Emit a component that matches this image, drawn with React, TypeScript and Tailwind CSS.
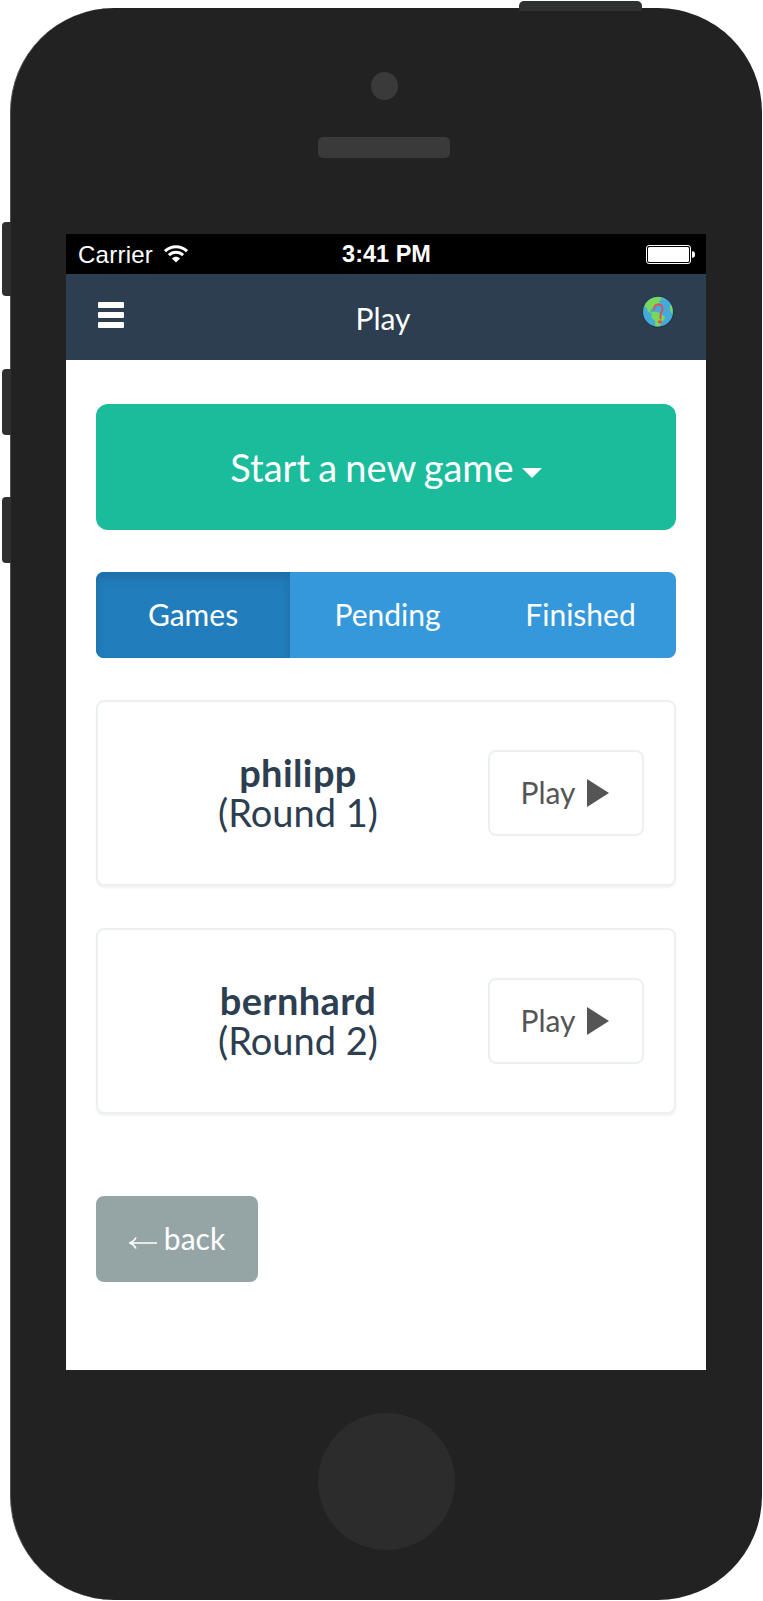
import React from 'react';

const games = [
  { name: 'philipp', round: 1 },
  { name: 'bernhard', round: 2 },
];

function WifiIcon() {
  return (
    <svg className="ml-[11px] h-[18px] w-[24px]" viewBox="0 0 24 18" fill="none" stroke="#fff" strokeWidth="3">
      <path d="M1 6.2C7.2 .1 16.800 .1 23 6.200" />
      <path d="M4.900 10.200C9 6.300 15 6.300 19.100 10.200" />
      <path d="M12 17.500L7.900 13.400C10.300 11.300 13.700 11.300 16.100 13.400Z" fill="#fff" stroke="none" />
    </svg>
  );
}

function BatteryIcon() {
  return (
    <svg className="h-[19px] w-[49px]" viewBox="0 0 49 19">
      <rect x=".5" y=".5" width="44" height="18" rx="2.500" fill="none" stroke="#fff" />
      <rect x="2" y="2" width="41" height="15" rx="1.500" fill="#fff" />
      <path d="M46 6.200h.5a2.500 3.300 0 0 1 0 6.600H46z" fill="#fff" />
    </svg>
  );
}

function GlobeIcon() {
  return (
    <svg className="h-8 w-8" viewBox="0 0 32 32">
      <circle cx="16" cy="16" r="15.800" fill="#24323b" />
      <circle cx="16" cy="15.700" r="15" fill="#43aadb" />
      <path d="M3.500 7.800C7 2.800 12 .7 17.500 1L20 1.600 18.500 3.700 17 5.500 18 7 14.500 8.500 12 11.500 9.500 13 8 15.500 9.500 16.500 12 15.700 16 16 18.500 18.500 22.500 20 23 22.500 20.500 25.500 17.500 30.300 13 30.200 13.200 25 9.200 21.500 9.800 18 6 15.500 4.500 11.500 2.500 11Z" fill="#7ad757" />
      <path d="M20.500 1.800l3 1.600-2 .4zM28.800 8.500c1.800 2.800 2.300 6.500 1.600 9.800l-2-3.300-.7-3.500z" fill="#7ad757" />
      <path d="M12.200 13.500C10.600 7.500 20.500 6.800 20.500 12c0 4.500-2.800 5.500-2 10.500" fill="none" stroke="#df4f58" strokeWidth="1.900" strokeLinecap="round" />
      <ellipse cx="18" cy="25.800" rx="2.200" ry="1.600" fill="#ef4650" />
    </svg>
  );
}

function GameCard({ name, round }: { name: string; round: number }) {
  return (
    <section className="flex h-[186px] items-center rounded-[8px] border-2 border-[#ecf0f1] bg-white pr-[30px] shadow-[0_2px_2px_rgba(0,0,0,0.05)]">
      <h4 className="ml-[30px] w-[340px] text-center text-[38px] leading-[39.6px] text-[#2c3e50]">
        <b className="tracking-[0.4px]">{name}</b>
        <br />
        (Round {round})
      </h4>
      <button className="ml-auto flex h-[86px] w-[156px] items-center justify-center rounded-[8px] border-2 border-[#ecf0f1] pb-[2px] pr-[3px] text-[30px] text-[#555]">
        Play
        <svg className="ml-[11px] mt-[2px] h-[28px] w-[22px]" viewBox="0 0 22 28" fill="#555">
          <path d="M0 0L22 14L0 28Z" />
        </svg>
      </button>
    </section>
  );
}

export default function App() {
  return (
    <div className="relative h-[1601px] w-[763px] overflow-hidden bg-white pl-[10px] pt-[8px] font-['Lato',sans-serif]">
      <div className="absolute left-[2px] top-[222px] h-[74px] w-[9px] rounded-l-[4px] bg-[#2f2f2f]" />
      <div className="absolute left-[2px] top-[369px] h-[66px] w-[9px] rounded-l-[4px] bg-[#2f2f2f]" />
      <div className="absolute left-[2px] top-[497px] h-[66px] w-[9px] rounded-l-[4px] bg-[#2f2f2f]" />

      <div className="flex h-[1592px] w-[752px] flex-col rounded-[104px] border-l border-[#555] bg-[#222] pl-[55px]">
        <div className="ml-[304.5px] mt-[64px] size-[27.5px] shrink-0 rounded-full bg-[#3a3a3a]" />
        <div className="ml-[252px] mt-[37.5px] h-[21px] w-[132px] shrink-0 rounded-[5px] bg-[#3a3a3a]" />

        <main className="mt-[76px] flex h-[1136px] w-[640px] shrink-0 flex-col bg-white">
          <div className="grid h-[40px] grid-cols-3 items-center bg-black pl-[12px] pr-[11px] font-['Liberation_Sans',sans-serif] text-white">
            <div className="flex items-center text-[24px]">
              <span className="mt-[2px] tracking-[0.25px]">Carrier</span>
              <WifiIcon />
            </div>
            <div className="pt-[2px] text-center text-[23.500px] font-bold">3:41 PM</div>
            <div className="flex justify-end">
              <BatteryIcon />
            </div>
          </div>

          <header className="grid h-[86px] grid-cols-3 bg-[#2c3e50] px-[32px] text-white">
            <div className="mt-[28px] flex flex-col gap-[4px]">
              <span className="h-[6px] w-[26px] rounded-[1px] bg-white" />
              <span className="h-[6px] w-[26px] rounded-[1px] bg-white" />
              <span className="h-[6px] w-[26px] rounded-[1px] bg-white" />
            </div>
            <h1 className="mt-[23px] pr-[6px] text-center text-[30px] leading-[42px]">Play</h1>
            <div className="mt-[22px] flex justify-end">
              <GlobeIcon />
            </div>
          </header>

          <div className="flex flex-col gap-[42px] px-[30px] pt-[44px]">
            <button className="flex h-[126px] items-center justify-center rounded-[12px] bg-[#1abc9c] text-[38px] text-white">
              <span className="[word-spacing:-1.500px]">Start a new game</span>
              <svg className="ml-[8px] mt-[11px] h-[10px] w-[20px]" viewBox="0 0 20 10" fill="#fff">
                <path d="M0 0H20L10 10Z" />
              </svg>
            </button>

            <nav className="flex h-[86px] overflow-hidden rounded-[8px] bg-[#3498db] text-[30px] text-white">
              <button className="w-[194px] bg-[#217dbb] pb-[2px] shadow-[inset_0_6px_10px_rgba(0,0,0,0.125)]">Games</button>
              <button className="w-[195px] pb-[2px]">Pending</button>
              <button className="w-[191px] pb-[2px]">Finished</button>
            </nav>

            {games.map((game) => (
              <GameCard key={game.name} name={game.name} round={game.round} />
            ))}

            <button className="mt-[40px] flex h-[86px] w-[162px] items-center justify-center rounded-[8px] bg-[#95a5a6] pb-[1px] text-[30px] text-white">
              <svg className="mr-[7px] mt-[8px] h-[12px] w-[28px]" viewBox="0 0 28 12" fill="none" stroke="#fff" strokeWidth="1.600">
                <path d="M1 6H28M7 .5Q5 4.500 1 6Q5 7.500 7 11.500" />
              </svg>
              back
            </button>
          </div>
        </main>

        <div className="ml-[252px] mt-[43px] size-[137px] shrink-0 rounded-full bg-[#2c2c2c]" />
      </div>

      <div className="absolute left-[519px] top-[1px] h-[10px] w-[123px] rounded-t-[5px] bg-[#2f3030]" />
    </div>
  );
}
